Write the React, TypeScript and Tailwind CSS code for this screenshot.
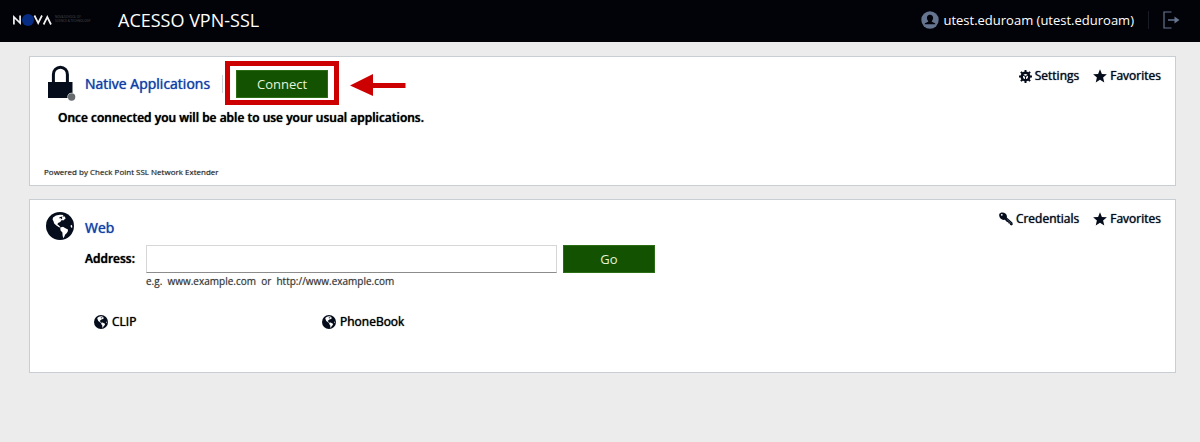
import React from "react";

function Globe({ className }: { className: string }) {
  return (
    <svg viewBox="0 0 28 28" className={className} aria-hidden="true">
      <circle cx="14" cy="14" r="14" fill="#050d1c" />
      <path
        fill="#fff"
        d="M7 5.5 10 3.6 14 2.7 17.6 3 16.4 4.4 18.8 4.6 19.6 6.6 17.2 8.4 15.8 8 14.2 10 12 11 11.4 12.6 12.4 13 14.4 15 13.4 15.4 10.4 13.4 8.2 11.4 7.4 9 6.6 7.6Z"
      />
      <path fill="#050d1c" d="M13.2 5.6 15.6 4.6 16.4 6.2 14.8 7.4 15 5.9 13.6 6.6Z" />
      <path
        fill="#fff"
        d="M14.2 15.4 17 14.8 19 16 22 17.6 21.8 19.4 20.4 21.4 19.2 22.4 18.4 24.6 17.2 26.2 16.6 23.4 16.4 20.6 14.6 18.4Z"
      />
      <path fill="#fff" d="M24.4 13.8 26 12.8 26.3 15.4 25.2 15.8Z" />
    </svg>
  );
}

function Lock() {
  return (
    <svg viewBox="0 0 28 36" className="h-9 w-7 self-start" aria-hidden="true">
      <path d="M5.4 17V9.4a7 7.2 0 0 1 14 0V17" fill="none" stroke="#050d1c" strokeWidth="3" />
      <path d="M0 17h24.500v16H0z" fill="#050d1c" />
      <circle cx="23.6" cy="32" r="4.2" fill="#fff" />
      <circle cx="23.6" cy="32" r="3.7" fill="#686c70" />
    </svg>
  );
}

function Gear() {
  return (
    <svg viewBox="0 0 24 24" className="size-[13px]" fill="none" stroke="#050d1c" aria-hidden="true">
      <circle cx="12" cy="12" r="7" strokeWidth="4.6" />
      <path
        strokeWidth="3.6"
        d="M12 0v4M12 20v4M0 12h4M20 12h4M3.5 3.5l3 3M17.5 17.5l3 3M20.5 3.5l-3 3M6.5 17.5l-3 3"
      />
      <path strokeWidth="2" d="M12 12V18M12 12 6.5 9M12 12l5.5-3" />
    </svg>
  );
}

function Star() {
  return (
    <svg viewBox="0 0 14 14" className="size-3.5" aria-hidden="true">
      <path
        fill="#050d1c"
        d="M7 .2 8.9 4.9 13.9 5.2 10.1 8.4 11.3 13.4 7 10.7 2.7 13.4 3.9 8.4.1 5.2 5.1 4.9Z"
      />
    </svg>
  );
}

function Key() {
  return (
    <svg viewBox="0 0 14 14" className="size-3.5" aria-hidden="true">
      <path
        fill="#050d1c"
        d="M.6 1.6C1.8.1 4.6 0 6.4 1.4 8 2.7 8.2 4.4 7.8 5.6L13.4 10.4 13.8 12.6 12.6 13.4 11 12.8 10.8 11.6 9.6 11.6 9.2 10.2 8 10 5.8 7.8C4 8.2 1.8 7.2.8 5.4 0 4 0 2.5.6 1.6Z"
      />
      <circle cx="2.8" cy="2.8" r=".9" fill="#fff" />
      <path d="M7.8 7.2 12.4 11.6" stroke="#8a909a" strokeWidth=".5" />
    </svg>
  );
}

function Logo() {
  return (
    <svg viewBox="0 0 82 18" className="h-[18px] w-[82px]" aria-label="NOVA School of Science and Technology">
      <circle cx="16" cy="9" r="6" fill="#062b83" />
      <g fill="none" stroke="#f2f2f2" strokeWidth="1.7">
        <path d="M1.9 13.5V6L8.1 12V4.5" />
        <path d="M22.4 4.5 26.2 12 30 4.5" />
        <path d="M31.6 13.5 35.3 6 39 13.5" />
      </g>
      <g fill="#4c4c50" fontFamily="Open Sans, sans-serif" fontSize="3">
        <text x="43" y="7">NOVA SCHOOL OF</text>
        <text x="43" y="11">SCIENCE &amp; TECHNOLOGY</text>
      </g>
    </svg>
  );
}

function Action({ icon, label }: { icon: React.ReactNode; label: string }) {
  return (
    <a
      href="#"
      className="flex items-center gap-[3px] text-xs leading-4 font-medium text-[#050d1c] [text-shadow:0_0_1px_currentColor]"
    >
      {icon}
      {label}
    </a>
  );
}

function Site({ label }: { label: string }) {
  return (
    <a
      href="#"
      className="flex w-[228px] items-center gap-1 text-xs leading-4 font-medium text-black [text-shadow:0_0_1px_currentColor]"
    >
      <Globe className="size-3.5" />
      {label}
    </a>
  );
}

const panel = "border border-[#c8ced3] bg-white";
const heading = "text-sm leading-5 font-medium text-[#123fa5] [text-shadow:0_0_1px_currentColor]";
const greenButton = "h-7 w-[92px] border border-[#2a6d14] bg-[#125200] text-[13px] leading-5 text-[#e4f3dc]";

export default function App() {
  return (
    <div className="min-h-screen bg-[#ececec] font-['Open_Sans',sans-serif]">
      <header className="flex h-[42px] items-center bg-[#020308] pr-5 pb-0.5 pl-3 text-white">
        <Logo />
        <h1 className="ml-6 text-lg leading-6">ACESSO VPN-SSL</h1>
        <div className="ml-auto flex items-center">
          <svg viewBox="0 0 18 18" className="size-[18px]" aria-hidden="true">
            <circle cx="9" cy="9" r="8.7" fill="#65748f" />
            <path
              fill="#020308"
              d="M9 3.7c2 0 3.2 1.4 3.1 3.4 0 1.3-.7 2.4-1.4 3 .1.9.8 1.2 2.1 1.6 1 .3 1.5.8 1.6 1.6H3.6c.1-.8.6-1.3 1.6-1.6 1.3-.4 2-.7 2.1-1.6-.7-.6-1.4-1.7-1.4-3C5.8 5.1 7 3.7 9 3.7Z"
            />
          </svg>
          <span className="ml-1 text-[13px] leading-5">utest.eduroam (utest.eduroam)</span>
          <span className="ml-3.5 h-[18px] w-px bg-[#191c24]" />
          <button type="button" aria-label="Sign out" className="ml-3.5">
            <svg viewBox="0 0 17 18" className="h-[18px] w-[17px]" fill="none" stroke="#65748f" aria-hidden="true">
              <path d="M8.5 1H1v16h7.5" strokeWidth="1.2" />
              <path d="M5 9h8" strokeWidth="1.5" />
              <path d="M11.5 5.5 16.5 9 11.5 12.5Z" fill="#65748f" stroke="none" />
            </svg>
          </button>
        </div>
      </header>

      <main className="flex flex-col gap-[13px] pt-3.5 pr-6 pl-[29px]">
        <section className={`${panel} h-[130px] px-3.5 pt-2`}>
          <div className="flex items-start">
            <div className="ml-1 flex h-[38px] items-center">
              <Lock />
              <h2 className={`${heading} ml-[9px]`}>Native Applications</h2>
              <span className="ml-3 h-[18px] w-px bg-[#cdd3da]" />
              <div className="relative ml-[13px] flex">
                <button type="button" className={greenButton}>
                  Connect
                </button>
                <span className="pointer-events-none absolute -top-[9px] -right-[11px] -bottom-[7px] -left-[11px] border-5 border-[#cc0000]" />
              </div>
              <svg viewBox="0 0 56 24" className="ml-[22px] h-6 w-14" aria-hidden="true">
                <path fill="#cc0000" d="M0 13.5 23 2V11H55.5V16H23V24Z" />
              </svg>
            </div>
            <div className="mt-[3px] ml-auto flex gap-3.5">
              <Action icon={<Gear />} label="Settings" />
              <Action icon={<Star />} label="Favorites" />
            </div>
          </div>
          <p className="mt-[7px] ml-3.5 text-xs leading-4 font-semibold text-black [text-shadow:0_0_1px_currentColor]">
            Once connected you will be able to use your usual applications.
          </p>
          <p className="mt-10 text-[8px] leading-3 font-medium text-[#222] [text-shadow:0_0_1px_#888]">
            Powered by Check Point SSL Network Extender
          </p>
        </section>

        <section className={`${panel} h-[174px] px-3.5 pt-3`}>
          <div className="flex items-start">
            <Globe className="ml-0.5 size-7" />
            <h2 className={`${heading} mt-1.5 ml-[11px]`}>Web</h2>
            <div className="-mt-px ml-auto flex gap-3.5">
              <Action icon={<Key />} label="Credentials" />
              <Action icon={<Star />} label="Favorites" />
            </div>
          </div>
          <form className="mt-[5px] ml-[41px] flex items-center" onSubmit={(e) => e.preventDefault()}>
            <label
              htmlFor="address"
              className="w-[61px] text-xs leading-4 font-semibold text-black [text-shadow:0_0_1px_currentColor]"
            >
              Address:
            </label>
            <input
              id="address"
              type="text"
              className="h-7 w-[411px] border border-[#d6d6d6] border-b-[#8c8c8c] bg-white px-2 text-xs outline-none"
            />
            <button type="submit" className={`${greenButton} ml-1.5`}>
              Go
            </button>
          </form>
          <p className="ml-[102px] text-[10px] leading-4 whitespace-pre text-[#333] [text-shadow:0_0_1px_#999]">
            {"e.g.  www.example.com  or  http://www.example.com"}
          </p>
          <nav className="mt-[25px] ml-[50px] flex">
            <Site label="CLIP" />
            <Site label="PhoneBook" />
          </nav>
        </section>
      </main>
    </div>
  );
}
